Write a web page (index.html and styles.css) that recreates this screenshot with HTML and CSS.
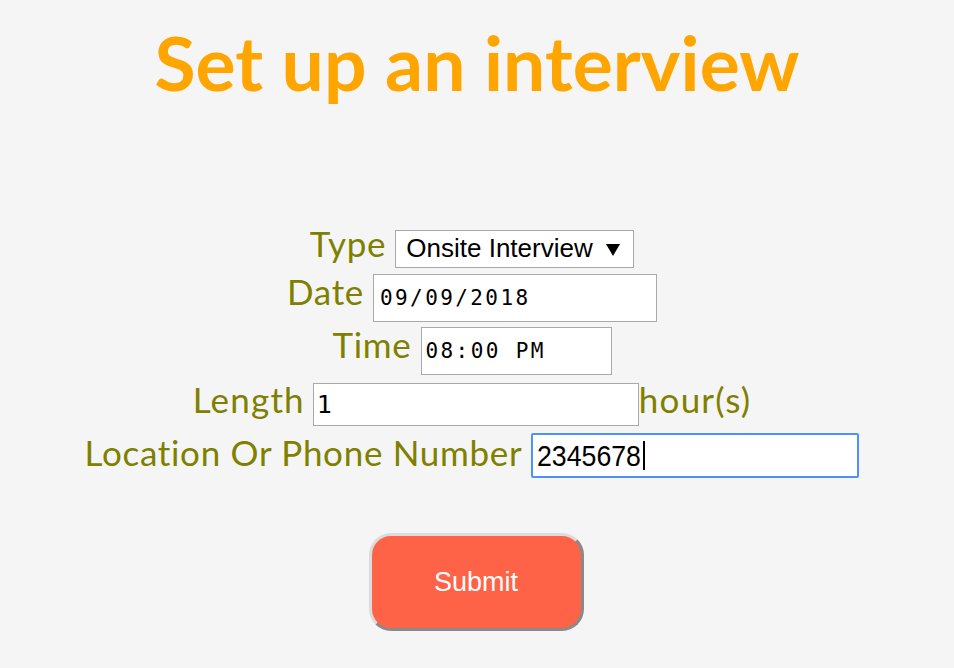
FILE: index.html
```html
<!DOCTYPE html>
<html>
<head>
<meta charset="utf-8">
<link rel="stylesheet" href="styles.css">
</head>
<body>
<h1 class="title">Set up an interview</h1>
<form class="form">
  <div class="row row-type">
    <label class="label">Type</label>
    <div class="select">Onsite Interview<svg class="arrow" width="14" height="12" viewBox="0 0 14 12"><polygon points="0,0 14,0 7,12" fill="#000"/></svg></div>
  </div>
  <div class="row row-date">
    <label class="label">Date</label>
    <input class="field mono date" type="text" value="09/09/2018">
  </div>
  <div class="row row-time">
    <label class="label">Time</label>
    <input class="field mono time" type="text" value="08:00 PM">
  </div>
  <div class="row row-length">
    <label class="label">Length</label>
    <input class="field mono length" type="text" value="1">
    <span class="label unit">hour(s)</span>
  </div>
  <div class="row row-loc">
    <label class="label">Location Or Phone Number</label>
    <div class="field loc"><span class="loc-text">2345678</span><span class="caret"></span></div>
  </div>
  <div class="row row-submit">
    <button class="submit" type="button">Submit</button>
  </div>
</form>
</body>
</html>
```
FILE: styles.css
```css
html, body {
  margin: 0;
  padding: 0;
  background: #f5f5f5;
}
body {
  width: 954px;
  height: 668px;
  overflow: hidden;
}
.title {
  margin: 17px 0 0 0;
  text-align: center;
  font-family: Lato, "Noto Sans", sans-serif;
  font-weight: 700;
  font-size: 75px;
  letter-spacing: 0.1px;
  line-height: 90px;
  color: #ffa500;
}
.form {
  display: flex;
  flex-direction: column;
  align-items: center;
  padding-right: 10px;
  margin-top: 123px;
}
.row {
  display: flex;
  align-items: baseline;
  justify-content: center;
}
.label {
  font-family: Lato, "Noto Sans", sans-serif;
  font-size: 35px;
  letter-spacing: 0.7px;
  line-height: 26px;
  color: #808000;
  margin-right: 9px;
}
.row-length .label {
  letter-spacing: 1.2px;
  margin-right: 8px;
}
.row-length .unit {
  margin-right: 0;
  margin-left: 0;
}
.field {
  box-sizing: border-box;
  border: 1px solid #a9a9a9;
  background: #fff;
  color: #000;
  margin: 0;
  padding: 0 4px;
  outline: none;
}
.mono {
  font-family: "DejaVu Sans Mono", monospace;
  font-size: 21px;
}
.select {
  box-sizing: border-box;
  display: flex;
  align-items: baseline;
  height: 38px;
  width: 239px;
  border: 1px solid #a9a9a9;
  background: #fff;
  font-family: "Liberation Sans", Arial, sans-serif;
  font-size: 26px;
  line-height: 35px;
  padding-left: 10px;
  color: #000;
}
.arrow {
  margin-left: 13px;
  align-self: center;
  margin-top: 1px;
}
.row-date { margin-top: 6px; }
.date {
  width: 284px;
  height: 48px;
  letter-spacing: 2.4px;
  padding-left: 6px;
}
.row-time { margin-top: 5px; }
.time {
  width: 191px;
  height: 48px;
  letter-spacing: 2.4px;
  padding-left: 4px;
}
.row-length { margin-top: 8px; }
.length {
  width: 326px;
  height: 43px;
  font-size: 25px;
  padding-left: 3px;
}
.row-loc { margin-top: 7px; }
.loc {
  width: 328px;
  height: 45px;
  border: 2px solid #4d90fe;
  border-radius: 2px;
  font-family: "Liberation Sans", Arial, sans-serif;
  font-size: 30px;
  line-height: 41px;
  padding-left: 4px;
  display: flex;
  align-items: baseline;
}
.loc-text {
  display: inline-block;
  transform: scaleX(0.89);
  transform-origin: 0 50%;
  width: 106px;
  white-space: nowrap;
}
.caret {
  display: inline-block;
  align-self: center;
  width: 2px;
  height: 29px;
  background: #000;
}
.row-submit { margin-top: 55px; }
.submit {
  box-sizing: border-box;
  width: 215px;
  height: 98px;
  border: 3px solid;
  border-color: #dcdcdc #8a8a8a #8a8a8a #dcdcdc;
  border-radius: 22px;
  background: #ff6347;
  color: #fff;
  font-family: "Liberation Sans", Arial, sans-serif;
  font-size: 27px;
  margin-left: 8px;
}
```
